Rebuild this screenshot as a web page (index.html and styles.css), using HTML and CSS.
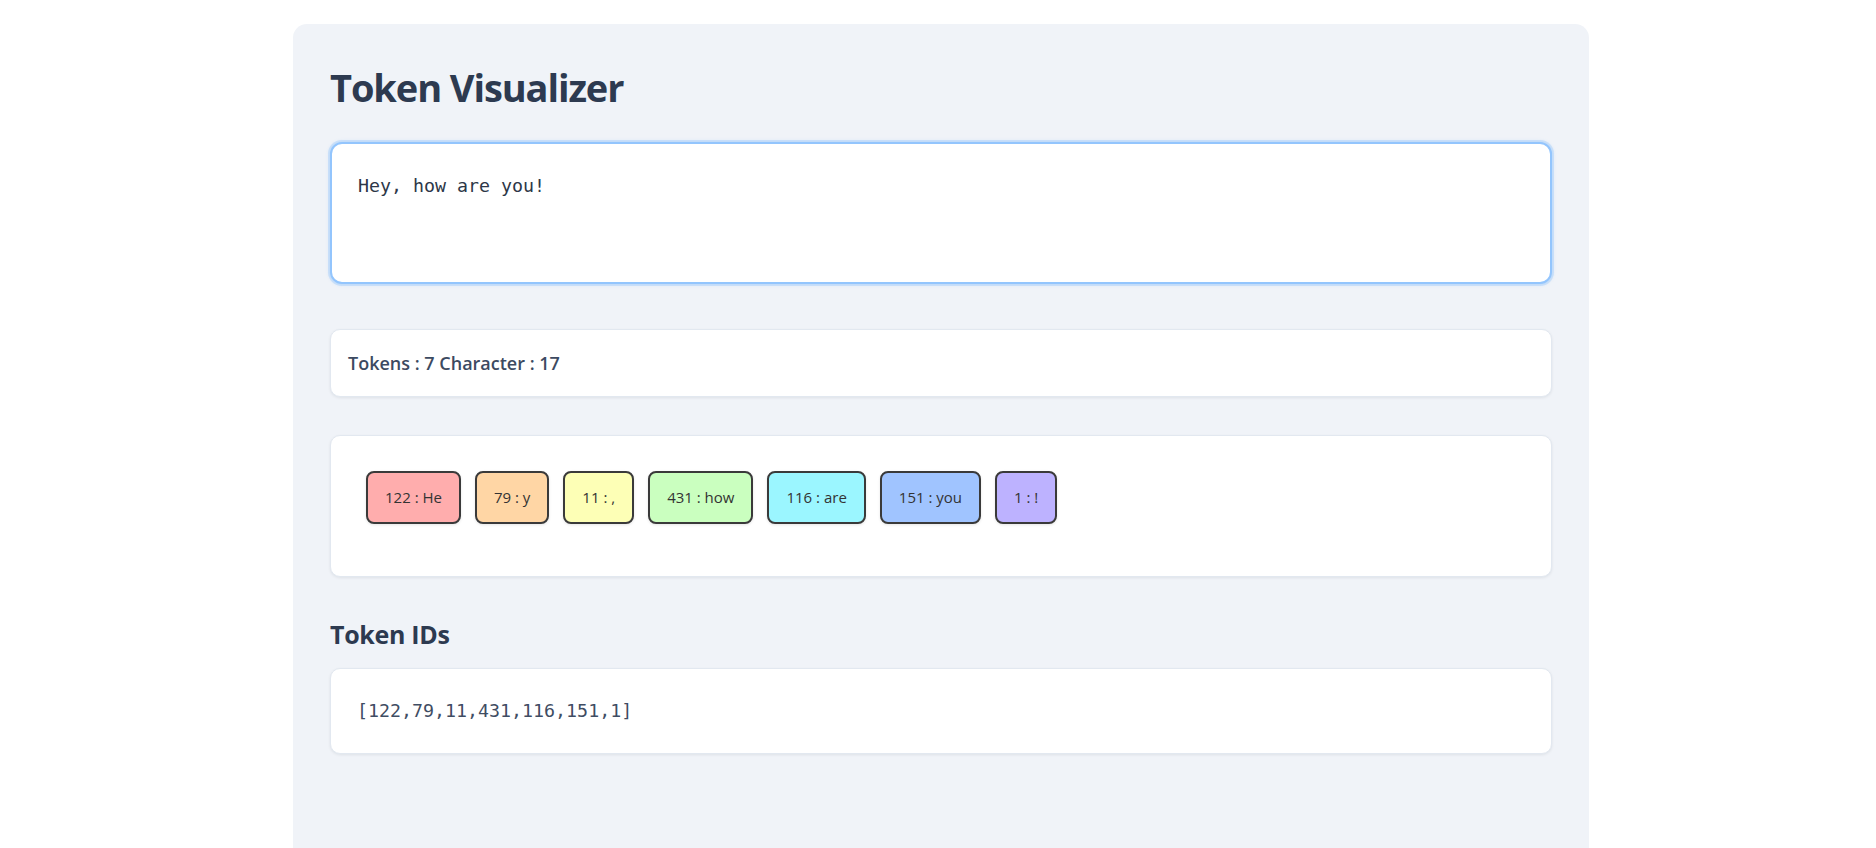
FILE: index.html
```html
<!DOCTYPE html>
<html lang="en">
<head>
<meta charset="utf-8">
<title>Token Visualizer</title>
<link rel="stylesheet" href="styles.css">
</head>
<body>
<main class="app">
  <h1 class="title">Token Visualizer</h1>
  <textarea class="input is-focused" id="input" spellcheck="false" autofocus>Hey, how are you!</textarea>
  <div class="card stats">Tokens : 7 Character : 17</div>
  <div class="card tokens">
    <span class="chip c1">122 : He</span>
    <span class="chip c2">79 : y</span>
    <span class="chip c3">11 : ,</span>
    <span class="chip c4">431 : how</span>
    <span class="chip c5">116 : are</span>
    <span class="chip c6">151 : you</span>
    <span class="chip c7">1 : !</span>
  </div>
  <h2 class="subtitle">Token IDs</h2>
  <div class="card ids">[122,79,11,431,116,151,1]</div>
</main>
<script src="script.js"></script>
</body>
</html>
```
FILE: styles.css
```css
* { box-sizing: border-box; }
html, body { margin: 0; padding: 0; background: #ffffff; }
body { font-family: "Open Sans", "Noto Sans", sans-serif; color: #2d3748; padding-left: 6px; }

.app {
  max-width: 1296px;
  min-height: 900px;
  margin: 24px auto 0;
  padding: 36px 37px 40px;
  background: #f0f3f8;
  border-radius: 14px 14px 0 0;
  display: flex;
  flex-direction: column;
}

.title {
  margin: 0 0 28px;
  font-size: 38px;
  line-height: 54px;
  font-weight: 700;
  color: #2d3a50;
  letter-spacing: -1.1px;
}

.input {
  display: block;
  width: 100%;
  height: 142px;
  padding: 30px 26px;
  font-family: "DejaVu Sans Mono", monospace;
  font-size: 18.3px;
  line-height: 24px;
  color: #2d3748;
  background: #ffffff;
  border: 2px solid #93c5fd;
  border-radius: 12px;
  resize: none;
  outline: none;
  caret-color: #2d3748;
}
.input.is-focused {
  box-shadow: 0 0 0 2px rgba(147, 197, 253, 0.35), 0 0 4px rgba(96, 165, 250, 0.3);
}

.card {
  background: #ffffff;
  border: 1px solid #e2e8f0;
  border-radius: 10px;
  box-shadow: 0 1px 3px rgba(15, 23, 42, 0.08);
}

.stats {
  margin-top: 45px;
  padding: 21px 17px;
  font-size: 18px;
  line-height: 24px;
  font-weight: 600;
  color: #3c4a61;
}

.tokens {
  margin-top: 38px;
  padding: 35px 35px 52px;
  display: flex;
  flex-wrap: wrap;
  gap: 14px;
}

.chip {
  display: inline-block;
  padding: 12px 17px;
  font-size: 15px;
  line-height: 25px;
  font-weight: 500;
  color: #333333;
  border: 2px solid #3a3a3a;
  border-radius: 8px;
  box-shadow: 0 1px 3px rgba(0, 0, 0, 0.1);
}
.c1 { background: #ffadad; }
.c2 { background: #ffd6a5; }
.c3 { background: #fdffb6; }
.c4 { background: #caffbf; }
.c5 { background: #9bf6ff; }
.c6 { background: #a0c4ff; }
.c7 { background: #bdb2ff; }

.subtitle {
  margin: 41px 0 18px;
  font-size: 25px;
  line-height: 32px;
  font-weight: 700;
  color: #2d3a50;
  letter-spacing: -0.3px;
}

.ids {
  padding: 30px 26px;
  font-family: "DejaVu Sans Mono", monospace;
  font-size: 18.3px;
  line-height: 24px;
  color: #3f4d63;
}
```
FILE: script.js
```js
var input = document.getElementById('input');
input.focus();
input.setSelectionRange(input.value.length, input.value.length);
```
